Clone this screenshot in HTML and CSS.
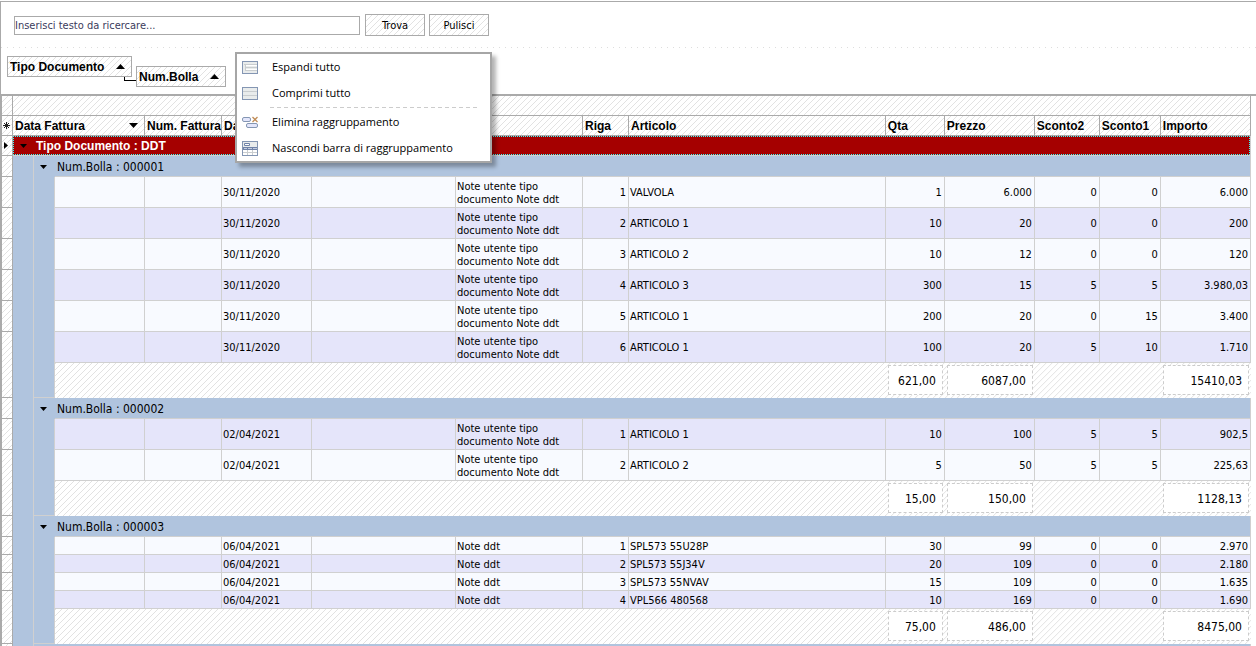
FILE: index.html
```html
<!DOCTYPE html>
<html lang="it">
<head>
<meta charset="utf-8">
<title>Documenti</title>
<link rel="stylesheet" href="styles.css">
</head>
<body>
<form class="search">
<input class="search-box" type="text" aria-label="Testo da ricercare" placeholder="Inserisci testo da ricercare...">
<button class="btn hatch" type="button">Trova</button>
<button class="btn hatch" type="button">Pulisci</button>
</form>
<div class="group-panel">
<button class="chip hatch" type="button">Tipo Documento<svg width="9" height="5"><path d="M0 5L4.500 0L9 5z"/></svg></button>
<span class="link"></span>
<button class="chip chip-low hatch" type="button">Num.Bolla<svg width="9" height="5"><path d="M0 5L4.500 0L9 5z"/></svg></button>
<div class="menu" role="menu">
<button class="item" role="menuitem" type="button"><svg width="16" height="13" viewBox="0 0 16 13"><rect x=".5" y=".5" width="15" height="12" fill="#e9ecec" stroke="#8496b3"/><path d="M4 4h11v1H4zM4 8h11v1H4z" fill="#fff"/><path d="M2 3.500h13M3 6.500h12M3 9.500h12M3.500 3v7" stroke="#c9cdcf" fill="none"/></svg>Espandi tutto</button>
<button class="item" role="menuitem" type="button"><svg width="16" height="13" viewBox="0 0 16 13"><rect x=".5" y=".5" width="15" height="12" fill="#e9ecec" stroke="#8496b3"/><path d="M1 4.500h14M1 8.500h14" stroke="#c9cdcf"/></svg>Comprimi tutto</button>
<div class="sep"></div>
<button class="item" role="menuitem" type="button"><svg width="16" height="13" viewBox="0 0 16 13"><rect x=".5" y="1.500" width="8" height="4" rx="1.500" fill="#e3e6fb" stroke="#8496b3"/><rect x="4.500" y="7.500" width="11" height="4" rx="1.500" fill="#e3e6fb" stroke="#8496b3"/><path d="M10.500 1l5 5M15.500 1l-5 5" stroke="#c18d58" stroke-width="1.300"/></svg>Elimina raggruppamento</button>
<button class="item" role="menuitem" type="button"><svg width="16" height="15" viewBox="0 0 16 15"><rect x=".5" y=".5" width="15" height="14" fill="#fff" stroke="#8496b3"/><path d="M1 1h14v5H1z" fill="#e9ecec"/><path d="M2.500 2.500h5v2h-5z" fill="#fff" stroke="#7083a8"/><path d="M1 6h14v3H1z" fill="#7083a8"/><path d="M2 7h3v1H2zM6 7h4v1H6zM11 7h4v1h-4z" fill="#c3cce0"/><path d="M1 11.500h14M5.500 9v5M10.500 9v5" stroke="#c9cdcf"/></svg>Nascondi barra di raggruppamento</button>
</div>
</div>
<div class="grid-wrap">
<table class="grid">
<colgroup><col class="w11"><col class="w21"><col class="w21"><col class="w90"><col class="w77"><col class="w90"><col class="w144"><col class="w127"><col class="w46"><col><col class="w59"><col class="w90"><col class="w65"><col class="w61"><col class="w90"></colgroup>
<thead>
<tr class="band"><td class="hatch"></td><td class="hatch" colspan="14"></td></tr>
<tr class="head"><th class="hatch ind" scope="col"><svg width="7" height="7" viewBox="0 0 7 7" stroke="#222" fill="none"><path d="M3.500 0v7M0 3.500h7M1 1l5 5M6 1L1 6"/></svg></th><th class="hatch" colspan="3" scope="col"><span class="head-sort">Data Fattura<svg width="9" height="5"><path d="M0 0L4.500 5L9 0z"/></svg></span></th><th class="hatch" scope="col">Num. Fattura</th><th class="hatch" scope="col">Data</th><th class="hatch"></th><th class="hatch"></th><th class="hatch" scope="col">Riga</th><th class="hatch" scope="col">Articolo</th><th class="hatch" scope="col">Qta</th><th class="hatch" scope="col">Prezzo</th><th class="hatch" scope="col">Sconto2</th><th class="hatch" scope="col">Sconto1</th><th class="hatch" scope="col">Importo</th></tr>
</thead>
<tbody>
<tr class="top-group"><td class="hatch ind"><svg width="4" height="7"><path d="M0 0L4 3.500L0 7z"/></svg></td><td colspan="14"><div class="focus"><svg width="7" height="4"><path d="M0 0h7L3.500 4z"/></svg>Tipo Documento : DDT</div></td></tr>

<tr class="group"><td class="hatch ind"></td><td class="lv1"></td><td colspan="13"><svg width="7" height="4"><path d="M0 0h7L3.500 4z"/></svg>Num.Bolla : 000001</td></tr>
<tr class="row tall"><td class="hatch ind"></td><td class="lv1"></td><td class="lv2"></td><td></td><td></td><td>30/11/2020</td><td></td><td class="note">Note utente tipo documento Note ddt</td><td class="n">1</td><td>VALVOLA</td><td class="n">1</td><td class="n">6.000</td><td class="n">0</td><td class="n">0</td><td class="n">6.000</td></tr>
<tr class="row tall alt"><td class="hatch ind"></td><td class="lv1"></td><td class="lv2"></td><td></td><td></td><td>30/11/2020</td><td></td><td class="note">Note utente tipo documento Note ddt</td><td class="n">2</td><td>ARTICOLO 1</td><td class="n">10</td><td class="n">20</td><td class="n">0</td><td class="n">0</td><td class="n">200</td></tr>
<tr class="row tall"><td class="hatch ind"></td><td class="lv1"></td><td class="lv2"></td><td></td><td></td><td>30/11/2020</td><td></td><td class="note">Note utente tipo documento Note ddt</td><td class="n">3</td><td>ARTICOLO 2</td><td class="n">10</td><td class="n">12</td><td class="n">0</td><td class="n">0</td><td class="n">120</td></tr>
<tr class="row tall alt"><td class="hatch ind"></td><td class="lv1"></td><td class="lv2"></td><td></td><td></td><td>30/11/2020</td><td></td><td class="note">Note utente tipo documento Note ddt</td><td class="n">4</td><td>ARTICOLO 3</td><td class="n">300</td><td class="n">15</td><td class="n">5</td><td class="n">5</td><td class="n">3.980,03</td></tr>
<tr class="row tall"><td class="hatch ind"></td><td class="lv1"></td><td class="lv2"></td><td></td><td></td><td>30/11/2020</td><td></td><td class="note">Note utente tipo documento Note ddt</td><td class="n">5</td><td>ARTICOLO 1</td><td class="n">200</td><td class="n">20</td><td class="n">0</td><td class="n">15</td><td class="n">3.400</td></tr>
<tr class="row tall alt"><td class="hatch ind" rowspan="2"></td><td class="lv1"></td><td class="lv2"></td><td></td><td></td><td>30/11/2020</td><td></td><td class="note">Note utente tipo documento Note ddt</td><td class="n">6</td><td>ARTICOLO 1</td><td class="n">100</td><td class="n">20</td><td class="n">5</td><td class="n">10</td><td class="n">1.710</td></tr>
<tr class="foot hatch"><td class="lv1"></td><td class="lv2 end"></td><td colspan="7"></td><td><div class="sum">621,00</div></td><td><div class="sum">6087,00</div></td><td colspan="2"></td><td><div class="sum">15410,03</div></td></tr>

<tr class="group"><td class="hatch ind"></td><td class="lv1"></td><td colspan="13"><svg width="7" height="4"><path d="M0 0h7L3.500 4z"/></svg>Num.Bolla : 000002</td></tr>
<tr class="row tall alt"><td class="hatch ind"></td><td class="lv1"></td><td class="lv2"></td><td></td><td></td><td>02/04/2021</td><td></td><td class="note">Note utente tipo documento Note ddt</td><td class="n">1</td><td>ARTICOLO 1</td><td class="n">10</td><td class="n">100</td><td class="n">5</td><td class="n">5</td><td class="n">902,5</td></tr>
<tr class="row tall"><td class="hatch ind" rowspan="2"></td><td class="lv1"></td><td class="lv2"></td><td></td><td></td><td>02/04/2021</td><td></td><td class="note">Note utente tipo documento Note ddt</td><td class="n">2</td><td>ARTICOLO 2</td><td class="n">5</td><td class="n">50</td><td class="n">5</td><td class="n">5</td><td class="n">225,63</td></tr>
<tr class="foot hatch"><td class="lv1"></td><td class="lv2 end"></td><td colspan="7"></td><td><div class="sum">15,00</div></td><td><div class="sum">150,00</div></td><td colspan="2"></td><td><div class="sum">1128,13</div></td></tr>

<tr class="group"><td class="hatch ind"></td><td class="lv1"></td><td colspan="13"><svg width="7" height="4"><path d="M0 0h7L3.500 4z"/></svg>Num.Bolla : 000003</td></tr>
<tr class="row"><td class="hatch ind"></td><td class="lv1"></td><td class="lv2"></td><td></td><td></td><td>06/04/2021</td><td></td><td>Note ddt</td><td class="n">1</td><td>SPL573 55U28P</td><td class="n">30</td><td class="n">99</td><td class="n">0</td><td class="n">0</td><td class="n">2.970</td></tr>
<tr class="row alt"><td class="hatch ind"></td><td class="lv1"></td><td class="lv2"></td><td></td><td></td><td>06/04/2021</td><td></td><td>Note ddt</td><td class="n">2</td><td>SPL573 55J34V</td><td class="n">20</td><td class="n">109</td><td class="n">0</td><td class="n">0</td><td class="n">2.180</td></tr>
<tr class="row"><td class="hatch ind"></td><td class="lv1"></td><td class="lv2"></td><td></td><td></td><td>06/04/2021</td><td></td><td>Note ddt</td><td class="n">3</td><td>SPL573 55NVAV</td><td class="n">15</td><td class="n">109</td><td class="n">0</td><td class="n">0</td><td class="n">1.635</td></tr>
<tr class="row alt"><td class="hatch ind" rowspan="2"></td><td class="lv1"></td><td class="lv2"></td><td></td><td></td><td>06/04/2021</td><td></td><td>Note ddt</td><td class="n">4</td><td>VPL566 480568</td><td class="n">10</td><td class="n">169</td><td class="n">0</td><td class="n">0</td><td class="n">1.690</td></tr>
<tr class="foot hatch"><td class="lv1"></td><td class="lv2 end"></td><td colspan="7"></td><td><div class="sum">75,00</div></td><td><div class="sum">486,00</div></td><td colspan="2"></td><td><div class="sum">8475,00</div></td></tr>
<tr class="group"><td class="hatch ind"></td><td class="lv1"></td><td colspan="13"></td></tr>
</tbody>
</table>
</div>
</body>
</html>
```
FILE: styles.css
```css
* { box-sizing: border-box; }
body {
  margin: 0;
  height: 100vh;
  overflow: hidden;
  padding-top: 1px;
  background: #fff;
  color: #000;
  font: 11px/13px "DejaVu Sans Condensed", "DejaVu Sans", sans-serif;
}
button { font: inherit; color: inherit; padding: 0; }
svg { display: block; flex: none; }
.hatch {
  background-color: #fff;
  background-image: linear-gradient(135deg, transparent 44%, #e2e2e2 44%, #e2e2e2 56%, transparent 56%);
  background-size: 6px 6px;
}
.search {
  display: flex;
  align-items: center;
  height: 47px;
  padding-left: 13px;
  border-top: 1px solid #aaa;
  border-left: 1px solid #aaa;
  background: repeating-linear-gradient(90deg, #ddd 0 1px, transparent 1px 6px) left bottom / 100% 1px no-repeat;
}
.search-box {
  width: 346px;
  height: 19px;
  margin-right: 5px;
  padding: 0;
  border: 1px solid #aaa;
  font: inherit;
}
.search-box::placeholder { color: #3b3b5c; opacity: 1; }
.btn {
  width: 60px;
  height: 22px;
  margin-right: 4px;
  border: 1px solid #aaa;
}
.group-panel {
  position: relative;
  display: flex;
  align-items: flex-start;
  height: 46px;
  padding: 8px 0 0 6px;
  border-left: 1px solid #aaa;
}
.chip {
  display: flex;
  align-items: center;
  justify-content: space-between;
  width: 125px;
  height: 21px;
  padding: 0 6px 0 2px;
  border: 1px solid #aaa;
  font: bold 12px/14px "Liberation Sans", Arial, sans-serif;
}
.chip-low { width: 90px; margin-top: 10px; }
.link {
  width: 12px;
  height: 4px;
  margin: 21px 0 0 -8px;
  border: solid #000;
  border-width: 0 0 1px 1px;
}
.menu {
  position: absolute;
  z-index: 2;
  top: 4px;
  left: 234px;
  width: 257px;
  background: #fff;
  border: 2px solid #a6a6a6;
  box-shadow: 4px 4px 4px rgba(0, 0, 0, .3);
}
.item {
  display: flex;
  align-items: center;
  width: 100%;
  height: 26px;
  padding-left: 5px;
  border: 0;
  background: none;
  font: 11px/16px "Open Sans", "Noto Sans", sans-serif;
  white-space: nowrap;
}
.item svg { margin-right: 14px; }
.sep {
  height: 3px;
  margin: 0 12px 0 33px;
  background: repeating-linear-gradient(90deg, #ccc 0 4px, transparent 4px 7px) 0 1px / 100% 1px no-repeat;
}
.grid-wrap {
  border-top: 2px solid #aaa;
  border-left: 2px solid #aaa;
}
.grid {
  width: calc(100% - 5px);
  table-layout: fixed;
  border-collapse: separate;
  border-spacing: 0;
}
.w11 { width: 11px; } .w21 { width: 21px; } .w46 { width: 46px; }
.w59 { width: 59px; } .w61 { width: 61px; } .w65 { width: 65px; }
.w77 { width: 77px; } .w90 { width: 90px; } .w127 { width: 127px; }
.w144 { width: 144px; }
.grid td, .grid th { padding: 0 2px; vertical-align: middle; }
.grid th, .band td {
  border: solid #aaa;
  border-width: 0 1px 1px 0;
}
.grid th {
  font: bold 12px/14px "Liberation Sans", Arial, sans-serif;
  text-align: left;
  white-space: nowrap;
}
.band { height: 20px; }
.head { height: 20px; }
.head-sort { display: flex; align-items: center; justify-content: space-between; padding-right: 4px; }
.grid .ind {
  padding: 0 0 0 2px;
  border: solid #aaa;
  border-width: 0 1px 1px 0;
}
.head .ind svg { margin-left: -1px; }
.top-group { height: 20px; background: #a50000; color: #fff; }
.grid .top-group td + td { padding: 0; border-right: 1px solid #d0d0d0; border-bottom: 1px solid #d0d0d0; }
.focus {
  display: flex;
  align-items: center;
  height: 19px;
  border: 1px dotted #3ff;
  padding-left: 6px;
  font: bold 12px/14px "Liberation Sans", Arial, sans-serif;
}
.focus svg { margin-right: 9px; }
.group { height: 21px; background: #b0c4de; font-size: 12px; }
.grid .group td + td + td {
  border-right: 1px solid #d0d0d0;
  padding: 2px 0 0 6px;
}
.group svg { display: inline-block; margin-right: 10px; vertical-align: 2px; }
.lv1 { background: #b0c4de; border-right: 1px solid #d0d0d0; }
.row { height: 18px; background: #f8faff; }
.row.tall { height: 31px; }
.row.alt { background: #e5e5fa; }
.row td:not(.ind):not(.lv1):not(.lv2) {
  padding: 2px 2px 0 1px;
  border: solid #d0d0d0;
  border-width: 0 1px 1px 0;
}
.row.tall td:not(.ind):not(.lv1):not(.lv2):not(.note) { padding-top: 0; }
.group + .row td:not(.ind):not(.lv1):not(.lv2) { box-shadow: 0 -1px #d0d0d0; }
.row .n { text-align: right; }
.lv2 { background: #b0c4de; border-right: 1px solid #d0d0d0; }
.foot { height: 35px; }
.grid .foot td { vertical-align: top; }
.lv2.end { border-bottom: 1px solid #d0d0d0; }
.sum {
  height: 30px;
  margin: 2px 0 0;
  padding-right: 6px;
  background: #fff;
  border: 1px dashed #ccc;
  font-size: 12px;
  line-height: 30px;
  text-align: right;
}
```
